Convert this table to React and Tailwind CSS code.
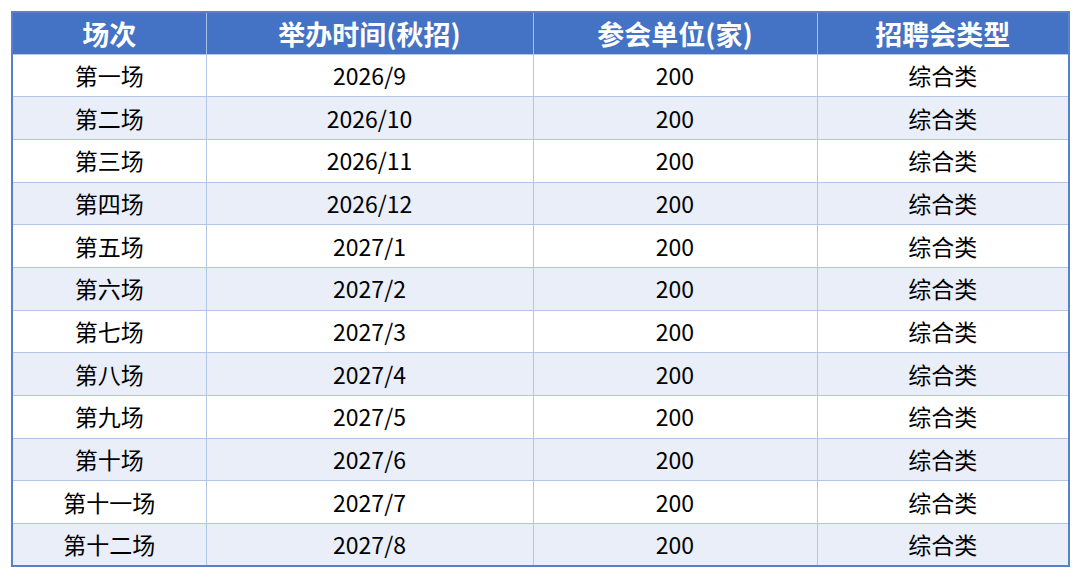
const rows = [
  ["第一场", "2026/9"],
  ["第二场", "2026/10"],
  ["第三场", "2026/11"],
  ["第四场", "2026/12"],
  ["第五场", "2027/1"],
  ["第六场", "2027/2"],
  ["第七场", "2027/3"],
  ["第八场", "2027/4"],
  ["第九场", "2027/5"],
  ["第十场", "2027/6"],
  ["第十一场", "2027/7"],
  ["第十二场", "2027/8"],
];

export default function App() {
  return (
    <div className="w-[1080px] h-[577px] bg-white pt-[11px] pl-[11px]" style={{ fontFamily: '"Noto Sans CJK SC", "Noto Sans", sans-serif' }}>
      <table className="border-collapse w-[1057px] table-fixed border-2 border-[#5a80cc]">
        <colgroup>
          <col className="w-[194px]" />
          <col className="w-[327px]" />
          <col className="w-[284px]" />
          <col className="w-[252px]" />
        </colgroup>
        <thead>
          <tr className="h-[42px] bg-[#4472c4] text-white text-[27px] font-bold">
            <th className="border-x border-[#a9bde6] p-0 leading-none">场次</th>
            <th className="border-x border-[#a9bde6] p-0 leading-none">举办时间(秋招)</th>
            <th className="border-x border-[#a9bde6] p-0 leading-none">参会单位(家)</th>
            <th className="border-x border-[#a9bde6] p-0 leading-none">招聘会类型</th>
          </tr>
        </thead>
        <tbody>
          {rows.map((r, i) => (
            <tr key={i} className={(i % 2 === 0 ? "bg-white" : "bg-[#e9eef9]") + " h-[42.7px] text-[23px] text-black"}>
              <td className="border border-[#b4c6e7] p-0 text-center leading-none">{r[0]}</td>
              <td className="border border-[#b4c6e7] p-0 text-center leading-none">{r[1]}</td>
              <td className="border border-[#b4c6e7] p-0 text-center leading-none">200</td>
              <td className="border border-[#b4c6e7] p-0 text-center leading-none">综合类</td>
            </tr>
          ))}
        </tbody>
      </table>
    </div>
  );
}
